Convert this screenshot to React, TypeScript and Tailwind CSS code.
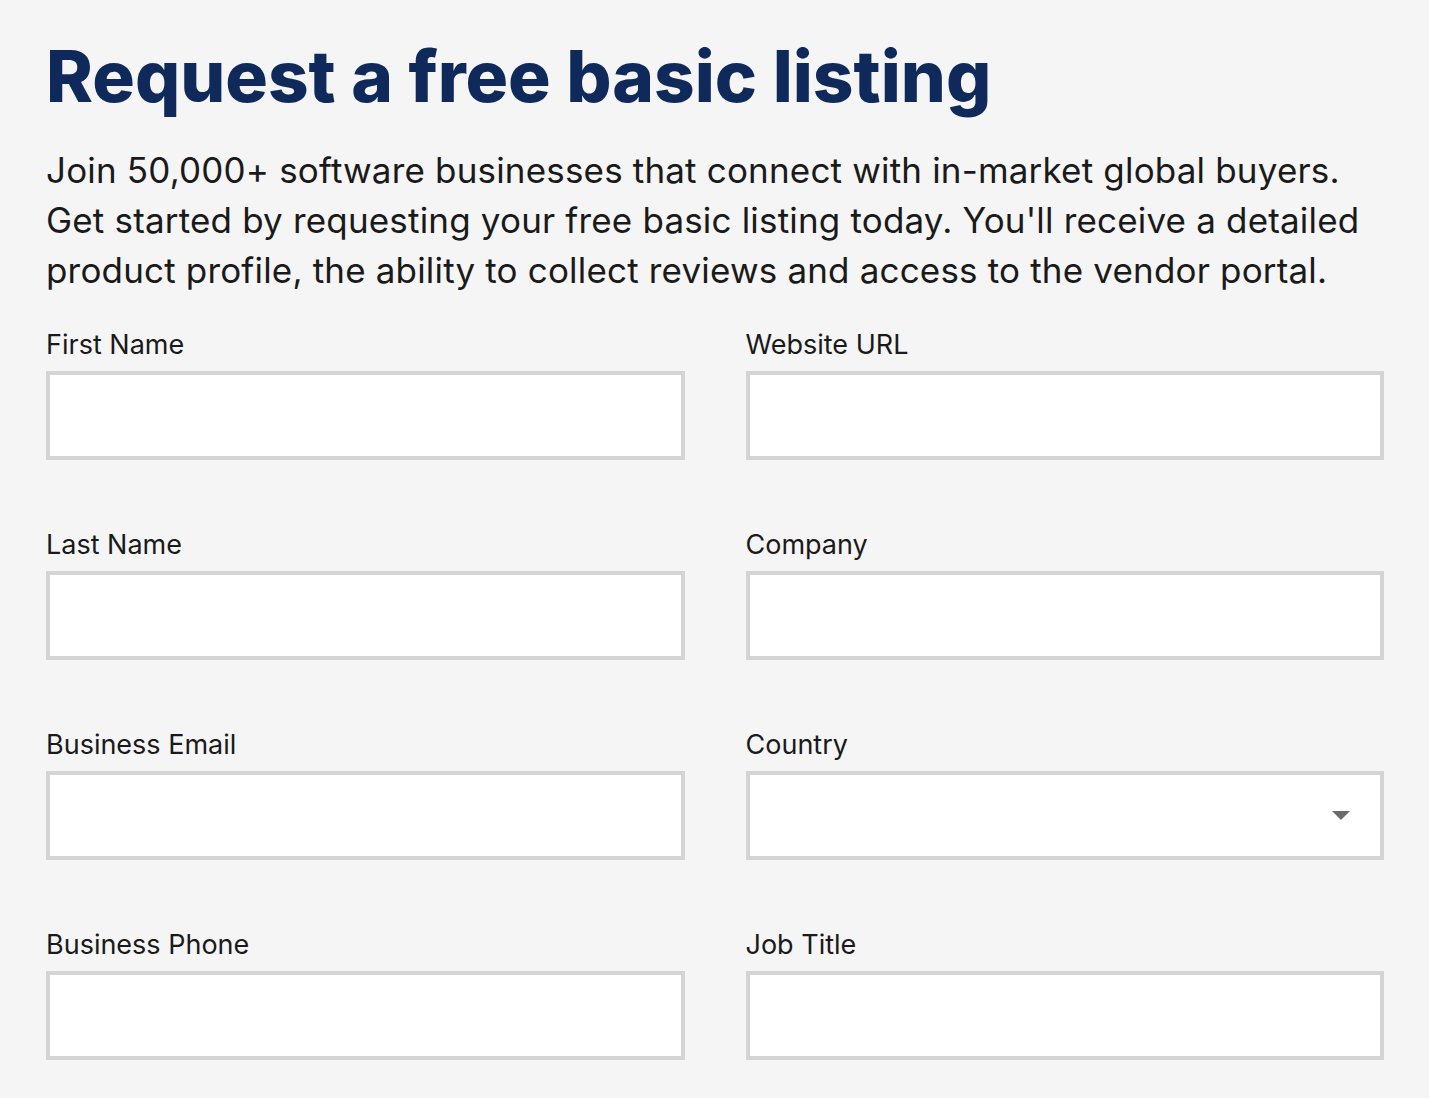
const leftFields = ['First Name', 'Last Name', 'Business Email', 'Business Phone']
const rightFields = ['Website URL', 'Company', 'Country', 'Job Title']

function Field({ label, select }: { label: string; select?: boolean }) {
  return (
    <div className="flex flex-col">
      <label className="text-[27px] leading-[36px] text-[#1a1a1a] mb-2">{label}</label>
      <div className="relative h-[89px] bg-white border-[4px] border-[#d4d4d4]">
        {select && (
          <svg className="absolute right-[30px] top-[36px]" width="18" height="10" viewBox="0 0 18 10">
            <path d="M0 0 L18 0 L9 9 Z" fill="#6b6b6b" />
          </svg>
        )}
      </div>
    </div>
  )
}

export default function App() {
  return (
    <div
      className="min-h-screen bg-[#f5f5f5] pl-[46px] pr-[46px] pt-[34px]"
      style={{ fontFamily: 'Inter, "Noto Sans", sans-serif' }}
    >
      <h1 className="text-[71px] leading-[84px] font-extrabold tracking-normal text-[#0f2a5a]">
        Request a free basic listing
      </h1>
      <p className="mt-[27px] text-[35px] leading-[50px] tracking-[0.005em] text-[#1a1a1a] w-[1340px]">
        Join 50,000+ software businesses that connect with in-market global buyers.
        <br />
        Get started by requesting your free basic listing today. You'll receive a detailed
        <br />
        product profile, the ability to collect reviews and access to the vendor portal.
      </p>
      <div className="mt-[32px] grid grid-cols-2 gap-x-[61px] gap-y-[67px] w-[1338px]">
        {leftFields.map((l, i) => (
          <>
            <Field key={l} label={l} />
            <Field key={rightFields[i]} label={rightFields[i]} select={rightFields[i] === 'Country'} />
          </>
        ))}
      </div>
    </div>
  )
}
